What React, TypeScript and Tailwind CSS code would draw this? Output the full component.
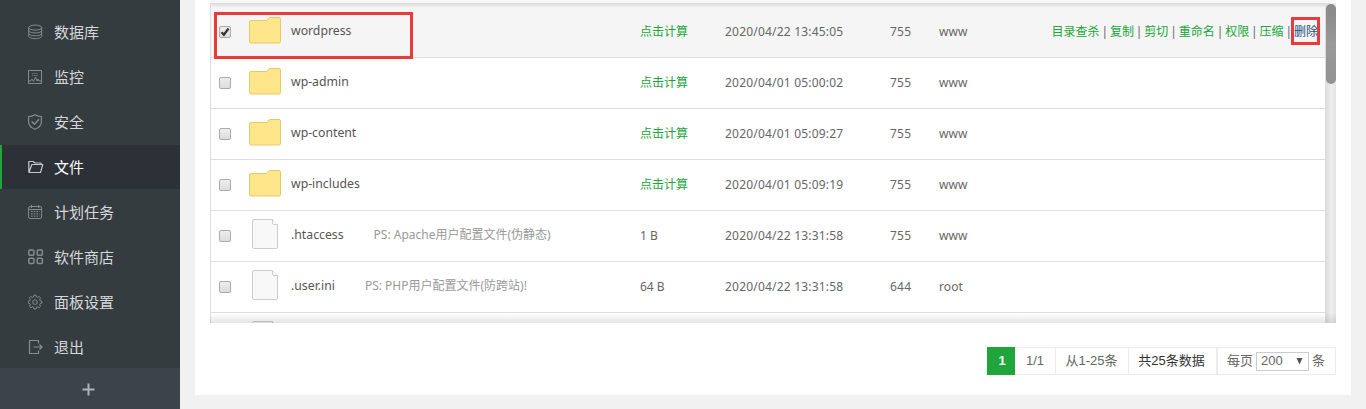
import React from 'react';

const strokes = {
  fill: 'none',
  stroke: 'currentColor',
  strokeWidth: 1,
} as const;

function MenuIcon({ name }: { name: string }) {
  return (
    <svg width="16" height="16" viewBox="0 0 16 16" {...strokes} className="shrink-0">
      {name === 'database' && (
        <>
          <ellipse cx="7.2" cy="3.6" rx="6.5" ry="2.5" />
          <path d="M.7 3.6v8.600c0 1.4 2.9 2.4 6.5 2.4s6.5-1 6.5-2.4V3.600M.7 6.5c0 1.4 2.9 2.4 6.5 2.4s6.5-1 6.5-2.4M.7 9.400c0 1.4 2.9 2.4 6.5 2.4s6.5-1 6.5-2.4" />
        </>
      )}
      {name === 'monitor' && (
        <>
          <path d="M.5 1.5h13v13H.5z" />
          <path d="M4 4.5h6M4 6.5h6" opacity=".5" />
          <path d="M1 12h1.500l1.500-2 1.5 2.500 2-4.500 1.500 4 1-2 1 2h2.500" />
        </>
      )}
      {name === 'shield' && (
        <>
          <path d="M7 .7C5 2 3 2.500.6 2.500V8c0 3.600 2.600 5.800 6.400 7.300 3.800-1.500 6.400-3.700 6.400-7.300V2.500C11 2.500 9 2 7 .7z" strokeWidth="1.200" />
          <path d="m3.700 7.500 2.800 2.800 4.500-5" strokeWidth="1.400" />
        </>
      )}
      {name === 'folder' && (
        <path
          d="M1 13.500 3.800 5.500h11l-2.300 8zM.8 13V2.500h4.500l1.500 1.500h6.200v1.500"
          strokeLinejoin="round"
          strokeWidth="1.200"
        />
      )}
      {name === 'calendar' && (
        <>
          <rect x=".6" y="2.500" width="13" height="12" rx="1.500" />
          <path d="M.6 5.500h13M3.500 1v3M10.700 1v3" />
          <path d="M3 7.500h8.500M3 9.800h8.500M3 12.100h8.500" strokeDasharray="1.700 1" />
        </>
      )}
      {name === 'apps' && (
        <g strokeWidth="1.500">
          <rect x=".8" y="1" width="5.200" height="5.200" rx="1.200" />
          <rect x="9.200" y="1" width="5.200" height="5.200" rx="1.200" />
          <rect x=".8" y="9.200" width="5.200" height="5.200" rx="1.200" />
          <rect x="9.200" y="9.200" width="5.200" height="5.200" rx="1.200" />
        </g>
      )}
      {name === 'gear' && (
        <>
          <path
            d="M6 1.200h2l.4 1.700 1.300.5 1.500-.9 1.400 1.400-.9 1.500.5 1.300 1.700.4v2l-1.700.4-.5 1.300.9 1.500-1.400 1.400-1.500-.9-1.300.5L8 15H6l-.4-1.700-1.300-.5-1.500.9-1.400-1.400.9-1.500-.5-1.300L.1 9.100v-2l1.700-.4.5-1.300-.9-1.500 1.400-1.400 1.500.9 1.300-.5z"
            strokeLinejoin="round"
          />
          <circle cx="7" cy="8.100" r="2.300" />
        </>
      )}
      {name === 'logout' && (
        <path
          d="M10.500 4.500v-3H1.500v13h9v-3M5.500 8h8.500M11.500 5.500 14 8l-2.500 2.500"
          strokeWidth="1.200"
          strokeLinejoin="round"
        />
      )}
    </svg>
  );
}

const menu = [
  { icon: 'database', label: '数据库' },
  { icon: 'monitor', label: '监控' },
  { icon: 'shield', label: '安全' },
  { icon: 'folder', label: '文件', active: true },
  { icon: 'calendar', label: '计划任务' },
  { icon: 'apps', label: '软件商店' },
  { icon: 'gear', label: '面板设置' },
  { icon: 'logout', label: '退出' },
];

function Sidebar() {
  return (
    <aside className="flex h-full w-[180px] shrink-0 flex-col bg-[#353c40] pt-2.5">
      {menu.map((m) => (
        <div key={m.label} className="h-[45px] shrink-0">
          <div
            className={
              m.active
                ? 'flex h-11 items-center border-l-2 border-[#20a53a] bg-[#2c3138] pl-[26px] text-[#c3c8cb]'
                : 'flex h-11 items-center pl-7 text-[#858b8f]'
            }
          >
            <MenuIcon name={m.icon} />
            <span
              className={
                m.active
                  ? 'ml-2.5 text-[15px] leading-none text-white'
                  : 'ml-2.5 text-[15px] leading-none text-[#d5d8da]'
              }
            >
              {m.label}
            </span>
          </div>
        </div>
      ))}
      <div className="-mt-0.5 flex flex-1 items-center justify-center bg-[#3c434b] pr-1 pt-0.5 text-[#aeb3b7]">
        <svg width="13" height="13" viewBox="0 0 13 13" fill="none" stroke="currentColor" strokeWidth="2">
          <path d="M6.500.5v12M.5 6.500h12" />
        </svg>
      </div>
    </aside>
  );
}

function Checkbox({ checked }: { checked?: boolean }) {
  return (
    <span className="mb-px flex size-3 shrink-0 items-center justify-center rounded-[2px] border border-[#aaa] bg-linear-to-b from-[#eee] to-[#dcdcdc]">
      {checked && (
        <svg width="10" height="10" viewBox="0 0 10 10" fill="none" stroke="#333" strokeWidth="2.200">
          <path d="m1.500 5.200 2.400 2.500L8.500 1.500" />
        </svg>
      )}
    </span>
  );
}

function FolderIcon() {
  return (
    <svg width="32" height="27" viewBox="0 0 32 27">
      <path
        d="M2 3.500h15.500c1.500 0 1.800-3 3.500-3h9a1.500 1.500 0 0 1 1.500 1.500v22.500a1.500 1.500 0 0 1-1.500 1.500H2A1.500 1.500 0 0 1 .5 24.500V5A1.500 1.500 0 0 1 2 3.500z"
        fill="#ffe68b"
        stroke="#e6c968"
      />
    </svg>
  );
}

function FileIcon() {
  return (
    <svg width="26" height="30" viewBox="0 0 26 30" fill="#f8f8f8" stroke="#ccc">
      <path d="M2 .5h18.500l5 5V28a1.500 1.500 0 0 1-1.500 1.500H2A1.500 1.500 0 0 1 .5 28V2A1.500 1.500 0 0 1 2 .5z" />
      <path d="M20.500.5V4a1.500 1.500 0 0 0 1.500 1.500h3.500" fill="#fff" />
    </svg>
  );
}

type Entry = {
  name: string;
  dir?: boolean;
  checked?: boolean;
  note?: string;
  size?: string;
  time: string;
  mode: string;
  owner: string;
};

const entries: Entry[] = [
  { name: 'wordpress', dir: true, checked: true, time: '2020/04/22 13:45:05', mode: '755', owner: 'www' },
  { name: 'wp-admin', dir: true, time: '2020/04/01 05:00:02', mode: '755', owner: 'www' },
  { name: 'wp-content', dir: true, time: '2020/04/01 05:09:27', mode: '755', owner: 'www' },
  { name: 'wp-includes', dir: true, time: '2020/04/01 05:09:19', mode: '755', owner: 'www' },
  { name: '.htaccess', note: 'PS: Apache用户配置文件(伪静态)', size: '1 B', time: '2020/04/22 13:31:58', mode: '755', owner: 'www' },
  { name: '.user.ini', note: 'PS: PHP用户配置文件(防跨站)!', size: '64 B', time: '2020/04/22 13:31:58', mode: '644', owner: 'root' },
];

const actions = ['目录查杀', '复制', '剪切', '重命名', '权限', '压缩', '删除'];

function Row({ entry }: { entry: Entry }) {
  return (
    <div
      className={
        entry.checked
          ? 'flex h-[51px] shrink-0 items-center border-b border-[#ddd] bg-[#f5f5f5] pl-2'
          : 'flex h-[51px] shrink-0 items-center border-b border-[#ddd] pl-2'
      }
    >
      <Checkbox checked={entry.checked} />
      <div className="ml-[18px] flex h-full w-8 justify-center pt-[10px]">
        {entry.dir ? <FolderIcon /> : <div className="-mt-0.5"><FileIcon /></div>}
      </div>
      <div className="ml-[10px] flex w-[349px] items-center pb-px">
        <span className="text-[12.25px] text-[#555]">{entry.name}</span>
        {entry.note && <span className="ml-[30px] text-xs text-[#999]">{entry.note}</span>}
      </div>
      <div className="w-[85px]">
        {entry.dir ? <span className="text-[#20a53a]">点击计算</span> : entry.size}
      </div>
      <div className="w-[165px] tracking-[0.2px]">{entry.time}</div>
      <div className="w-[49px] tracking-[0.2px]">{entry.mode}</div>
      <div className="w-[60px] tracking-[0.1px]">{entry.owner}</div>
      {entry.checked && (
        <div className="ml-auto flex pr-[7px]">
          {actions.map((a, i) => (
            <React.Fragment key={a}>
              {i > 0 && <span className="w-[10.400px] text-center">|</span>}
              <span className={a === '删除' ? 'text-[#23527c]' : 'text-[#20a53a]'}>{a}</span>
            </React.Fragment>
          ))}
        </div>
      )}
    </div>
  );
}

function FileTable() {
  return (
    <div className="flex h-[323px] shrink-0 flex-col overflow-hidden">
      <div className="h-[3px] shrink-0 bg-[#f7f7f7]" />
      <div className="relative flex min-h-0 flex-1">
        <div className="flex flex-1 flex-col overflow-hidden border-l border-[#ddd]">
          <div className="h-1 shrink-0 bg-linear-to-b from-[#dadada] to-[#f0f0f0]" />
          {entries.map((e) => (
            <Row key={e.name} entry={e} />
          ))}
          <div className="flex h-[11px] shrink-0 pl-[41px] pt-2">
            <FileIcon />
          </div>
        </div>
        <div className="w-[11px] border-l border-[#ddd] bg-linear-to-r from-[#ddd] via-[#eee] to-[#e4e4e4] pt-px">
          <div className="h-20 w-[10px] rounded-full bg-linear-to-b from-[#888] via-[#999] to-[#929292]" />
        </div>
        <div className="absolute inset-x-0 bottom-0 h-2.5 bg-linear-to-t from-black/10 to-transparent" />
        <div className="absolute top-[9px] left-1 h-[47px] w-[199px] border-3 border-[#e93b3b]" />
        <div className="absolute top-[14px] right-4 h-7 w-[29px] border-3 border-[#e93b3b]" />
      </div>
    </div>
  );
}

function Pager() {
  return (
    <div className="mt-6 flex h-7 w-[349px] self-end font-['Liberation_Sans','Noto_Sans_CJK_SC',sans-serif] text-[13px] text-[#666]">
      <div className="flex w-7 items-center justify-center bg-[#20a53a] pl-0.5 font-bold text-white">1</div>
      <div className="flex w-[41px] items-center justify-center border border-l-0 border-[#ececec] text-[13px]">1/1</div>
      <div className="flex w-[73px] items-center justify-center border-y border-r border-[#ececec] pr-px">从1-25条</div>
      <div className="flex w-[87px] items-center justify-center border-y border-[#ececec] pr-0.5 text-[#333]">共25条数据</div>
      <div className="flex flex-1 items-center border border-l-2 border-[#ececec] pl-[9px]">
        <span>每页</span>
        <div className="ml-[3px] flex h-[19px] w-[53px] items-center justify-between border border-[#ccc] bg-white pr-[5px] pl-1">
          <span>200</span>
          <svg width="7" height="7" viewBox="0 0 7 7" fill="#555">
            <path d="M.5 0h6L3.500 6.500z" />
          </svg>
        </div>
        <span className="ml-[3px]">条</span>
      </div>
    </div>
  );
}

export default function App() {
  return (
    <div className="flex h-[409px] w-[1366px] overflow-hidden bg-[#f1f1f1] font-['Noto_Sans','Noto_Sans_CJK_SC',sans-serif] text-xs text-[#666]">
      <Sidebar />
      <main className="ml-[15px] flex h-[395px] w-[1156px] flex-col bg-white px-[15px]">
        <FileTable />
        <Pager />
      </main>
    </div>
  );
}
